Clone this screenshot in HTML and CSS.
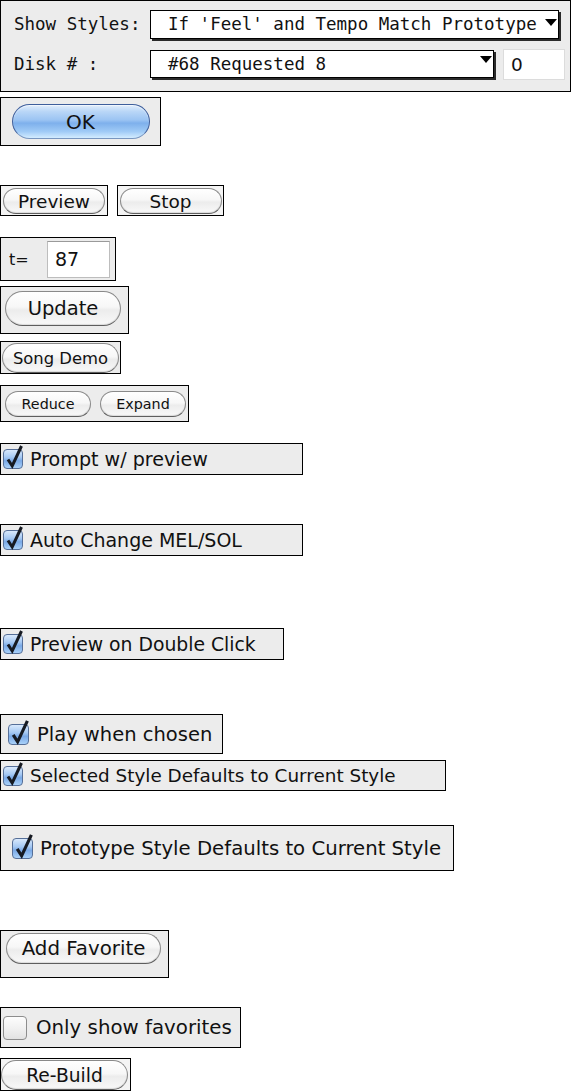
FILE: index.html
```html
<!DOCTYPE html>
<html lang="en">
<head>
<meta charset="utf-8">
<title>Style Picker Controls</title>
<link rel="stylesheet" href="styles.css">
</head>
<body>
<main class="page">

  <section class="box prefs">
    <div class="prefs-row">
      <span class="mono-label">Show Styles:</span>
      <div class="popup popup-wide">
        <span class="popup-text">If 'Feel' and Tempo Match Prototype</span>
        <span class="popup-arrow"></span>
      </div>
    </div>
    <div class="prefs-row row-disk">
      <span class="mono-label">Disk # :</span>
      <div class="popup popup-disk">
        <span class="popup-text">#68 Requested 8</span>
        <span class="popup-arrow"></span>
      </div>
      <div class="num-field">0</div>
    </div>
  </section>

  <div class="box ok-box"><span class="aqua">OK</span></div>

  <div class="pair">
    <div class="box btn-preview"><span class="pill f-preview">Preview</span></div>
    <div class="box btn-stop"><span class="pill f-preview">Stop</span></div>
  </div>

  <div class="box tempo-box">
    <span class="tempo-label">t=</span>
    <span class="tempo-field">87</span>
  </div>

  <div class="box update-box"><span class="pill pill-update">Update</span></div>

  <div class="box song-box"><span class="pill pill-song">Song Demo</span></div>

  <div class="box re-box">
    <span class="pill pill-small">Reduce</span>
    <span class="pill pill-small">Expand</span>
  </div>

  <div class="box check-row row-prompt">
    <span class="cb on"><svg class="tick" viewBox="0 0 20 20" width="20" height="20"><path d="M4 9.5 L8.2 16 L17.5 -4" /></svg></span>
    <span class="check-label">Prompt w/ preview</span>
  </div>

  <div class="box check-row row-auto">
    <span class="cb on"><svg class="tick" viewBox="0 0 20 20" width="20" height="20"><path d="M4 9.5 L8.2 16 L17.5 -4" /></svg></span>
    <span class="check-label">Auto Change MEL/SOL</span>
  </div>

  <div class="box check-row row-dbl">
    <span class="cb on"><svg class="tick" viewBox="0 0 20 20" width="20" height="20"><path d="M4 9.5 L8.2 16 L17.5 -4" /></svg></span>
    <span class="check-label">Preview on Double Click</span>
  </div>

  <div class="box check-row row-play">
    <span class="cb on cb-big"><svg class="tick" viewBox="0 0 20 20" width="21" height="21"><path d="M4 9.5 L8.2 16 L17.5 -4" /></svg></span>
    <span class="check-label">Play when chosen</span>
  </div>

  <div class="box check-row row-selected">
    <span class="cb on"><svg class="tick" viewBox="0 0 20 20" width="20" height="20"><path d="M4 9.5 L8.2 16 L17.5 -4" /></svg></span>
    <span class="check-label">Selected Style Defaults to Current Style</span>
  </div>

  <div class="box check-row row-proto">
    <span class="cb on cb-big"><svg class="tick" viewBox="0 0 20 20" width="21" height="21"><path d="M4 9.5 L8.2 16 L17.5 -4" /></svg></span>
    <span class="check-label">Prototype Style Defaults to Current Style</span>
  </div>

  <div class="box fav-box"><span class="pill pill-fav">Add Favorite</span></div>

  <div class="box check-row row-only">
    <span class="cb off"></span>
    <span class="check-label">Only show favorites</span>
  </div>

  <div class="box rebuild-box"><span class="pill pill-rebuild">Re-Build</span></div>

</main>
</body>
</html>
```

FILE: styles.css
```css
* { box-sizing: border-box; }

html, body {
  margin: 0;
  padding: 0;
  background: #ffffff;
}

body {
  font-family: "DejaVu Sans", Verdana, sans-serif;
  color: #111;
}

.page {
  display: flex;
  flex-direction: column;
  align-items: flex-start;
}

.box {
  border: 1px solid #000;
  background: #ececec;
}

/* ---------- top preferences panel ---------- */
.prefs {
  width: 571px;
  height: 92px;
  padding: 9px 0 0 12px;
  display: flex;
  flex-direction: column;
  gap: 11px;
}

.prefs-row {
  display: flex;
  align-items: flex-start;
}

.mono-label {
  width: 137px;
  font-family: "DejaVu Sans Mono", "Liberation Mono", monospace;
  font-size: 17.5px;
  line-height: 29px;
  color: #111;
  padding-left: 1px;
}

.popup {
  display: flex;
  align-items: flex-start;
  justify-content: space-between;
  background: #fff;
  border: 1px solid #000;
  box-shadow: 2px 2px 0 #2a2a2a;
  padding-left: 17px;
  padding-right: 1px;
}

.popup-wide { width: 409px; height: 29px; }
.popup-disk { width: 344px; height: 28px; }

.popup-text {
  font-family: "DejaVu Sans Mono", "Liberation Mono", monospace;
  font-size: 17.5px;
  line-height: 27px;
  color: #111;
  white-space: nowrap;
}

.popup-arrow {
  width: 0;
  height: 0;
  border-left: 6px solid transparent;
  border-right: 6px solid transparent;
  border-top: 7px solid #000;
  margin-top: 8px;
}

.popup-disk .popup-arrow { margin-top: 5px; }

.num-field {
  width: 62px;
  height: 31px;
  margin-left: 9px;
  margin-top: -1px;
  background: #fff;
  border: 1px solid #dcdcdc;
  font-size: 18.5px;
  line-height: 29px;
  padding-left: 7px;
}

/* ---------- OK ---------- */
.ok-box {
  margin-top: 5px;
  width: 161px;
  height: 49px;
  display: flex;
  align-items: center;
  justify-content: center;
}

.aqua {
  width: 138px;
  height: 35px;
  border-radius: 18px;
  border: 1px solid #3f5f9c;
  border-bottom-color: #7896c0;
  background: linear-gradient(#e2eefc 0%, #b9d6f7 20%, #9cc4f3 45%, #7eb0ec 55%, #9fcaf6 80%, #d3ecff 100%);
  box-shadow: inset 0 1px 1px rgba(255,255,255,.6);
  display: flex;
  align-items: center;
  justify-content: center;
  font-size: 20px;
  color: #111;
}

/* ---------- pill buttons ---------- */
.pill {
  display: flex;
  align-items: center;
  justify-content: center;
  border: 1px solid #8a8a8a;
  border-bottom-color: #5e5e5e;
  border-radius: 999px;
  background: linear-gradient(#ffffff 0%, #f7f7f7 45%, #ececec 55%, #f9f9f9 100%);
  box-shadow: inset 0 -1px 1px rgba(0,0,0,.12);
  color: #111;
  white-space: nowrap;
}

.pair {
  margin-top: 39px;
  display: flex;
  gap: 9px;
}

.btn-preview, .btn-stop {
  height: 31px;
  display: flex;
  align-items: center;
  justify-content: center;
  background: #f4f4f4;
}
.btn-preview { width: 108px; }
.btn-stop { width: 107px; }

.f-preview {
  width: 102px;
  height: 26px;
  font-size: 18.5px;
  margin-top: 1px;
}

.tempo-box {
  margin-top: 21px;
  width: 116px;
  height: 44px;
  display: flex;
  align-items: center;
  padding-left: 8px;
}

.tempo-label {
  font-size: 16px;
  width: 38px;
}

.tempo-field {
  width: 63px;
  height: 37px;
  background: #fff;
  border: 1px solid #bdbdbd;
  border-top-color: #9a9a9a;
  font-size: 19px;
  line-height: 35px;
  padding-left: 7px;
}

.update-box {
  margin-top: 5px;
  width: 129px;
  height: 48px;
  padding: 4px 0 0 4px;
}

.pill-update {
  width: 116px;
  height: 35px;
  font-size: 19.5px;
}

.song-box {
  margin-top: 7px;
  width: 121px;
  height: 33px;
  padding: 1px 0 0 1px;
}

.pill-song {
  width: 117px;
  height: 30px;
  font-size: 16.4px;
}

.re-box {
  margin-top: 11px;
  width: 189px;
  height: 37px;
  display: flex;
  align-items: center;
  gap: 9px;
  padding-left: 4px;
}

.pill-small {
  width: 86px;
  height: 26px;
  font-size: 14.3px;
}

/* ---------- checkbox rows ---------- */
.check-row {
  display: flex;
  align-items: center;
  padding-left: 2px;
  white-space: nowrap;
}

.cb {
  flex: none;
  width: 20px;
  height: 20px;
  border-radius: 4px;
  border: 1px solid #566f98;
  display: block;
}

.cb.on {
  background: linear-gradient(#d9e9fc 0%, #a6c9f3 40%, #7aa9e6 60%, #a9d1f9 100%);
}

.cb.off {
  width: 24px;
  height: 24px;
  border-color: #8d8d8d;
  background: linear-gradient(#fdfdfd 0%, #f1f1f1 50%, #e2e2e2 100%);
}

.cb-big { width: 21px; height: 21px; }

.tick {
  display: block;
  overflow: visible;
}

.tick path {
  fill: none;
  stroke: #161a22;
  stroke-width: 3;
  stroke-linejoin: miter;
}

.check-label { margin-left: 7px; }

.row-prompt { margin-top: 21px; width: 303px; height: 32px; }
.row-prompt .check-label { font-size: 19.1px; }

.row-auto { margin-top: 49px; width: 303px; height: 32px; }
.row-auto .check-label { font-size: 19px; }

.row-dbl { margin-top: 72px; width: 284px; height: 32px; }
.row-dbl .check-label { font-size: 18.8px; }

.row-play { margin-top: 54px; width: 223px; height: 40px; padding-left: 7px; }
.row-play .check-label { font-size: 19.5px; margin-left: 8px; }

.row-selected { margin-top: 6px; width: 446px; height: 31px; }
.row-selected .check-label { font-size: 18.4px; }

.row-proto { margin-top: 34px; width: 454px; height: 46px; padding-left: 11px; }
.row-proto .check-label { font-size: 19.7px; }

.fav-box {
  margin-top: 59px;
  width: 169px;
  height: 48px;
  padding: 2px 0 0 5px;
}

.pill-fav {
  width: 155px;
  height: 31px;
  font-size: 19.8px;
}

.row-only { margin-top: 29px; width: 241px; height: 41px; }
.row-only .check-label { font-size: 19.8px; margin-left: 9px; }

.rebuild-box {
  margin-top: 10px;
  width: 131px;
  height: 33px;
  padding: 1px 0 0 0;
  background: #f4f4f4;
}

.pill-rebuild {
  width: 127px;
  height: 30px;
  font-size: 18.7px;
}
```
